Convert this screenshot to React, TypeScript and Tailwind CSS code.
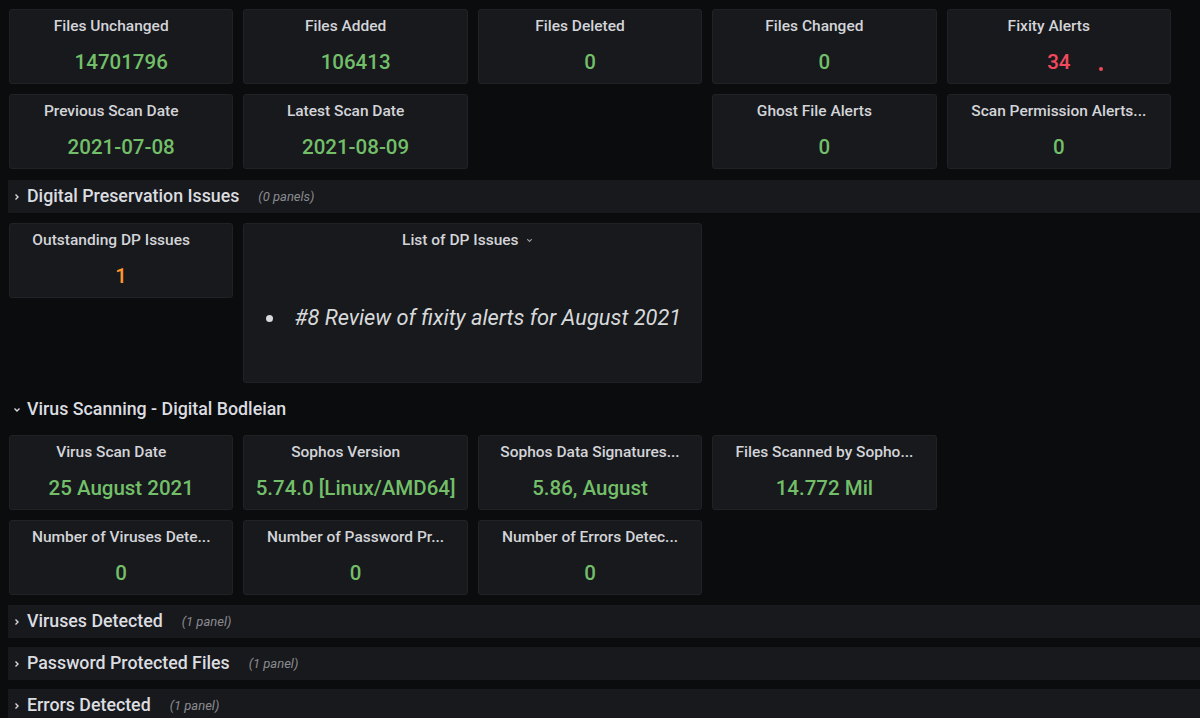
type Stat = {
  title: string;
  value?: string;
  color?: string;
  dot?: boolean;
  empty?: boolean;
};

const topStats: Stat[] = [
  { title: 'Files Unchanged', value: '14701796' },
  { title: 'Files Added', value: '106413' },
  { title: 'Files Deleted', value: '0' },
  { title: 'Files Changed', value: '0' },
  { title: 'Fixity Alerts', value: '34', color: 'text-[#f2495c]', dot: true },
  { title: 'Previous Scan Date', value: '2021-07-08' },
  { title: 'Latest Scan Date', value: '2021-08-09' },
  { title: '', empty: true },
  { title: 'Ghost File Alerts', value: '0' },
  { title: 'Scan Permission Alerts...', value: '0' },
];

const virusStats: Stat[] = [
  { title: 'Virus Scan Date', value: '25 August 2021' },
  { title: 'Sophos Version', value: '5.74.0 [Linux/AMD64]' },
  { title: 'Sophos Data Signatures...', value: '5.86, August' },
  { title: 'Files Scanned by Sopho...', value: '14.772 Mil' },
  { title: '', empty: true },
  { title: 'Number of Viruses Dete...', value: '0' },
  { title: 'Number of Password Pr...', value: '0' },
  { title: 'Number of Errors Detec...', value: '0' },
];

function StatPanel({ stat }: { stat: Stat }) {
  if (stat.empty) return <div className="h-[75px]" />;
  const truncated = stat.title.endsWith('...');
  return (
    <div className="relative h-[75px] rounded-[3px] border border-[#202226] bg-[#17191d] flex flex-col items-center">
      <div
        className={`mt-[6px] self-stretch text-center text-[15.5px] font-medium leading-[20px] text-[#d3d4d8] whitespace-nowrap ${
          truncated ? 'px-0' : 'pr-[20px]'
        }`}
      >
        {stat.title}
      </div>
      <div className={`mt-[14px] text-[20.5px] font-medium leading-[24px] ${stat.color ?? 'text-[#73bf69]'}`}>
        {stat.value}
      </div>
      {stat.dot && <span className="absolute left-[151px] top-[57px] h-[4px] w-[4px] rounded-full bg-[#f2495c]" />}
    </div>
  );
}

function Chevron({ open }: { open?: boolean }) {
  return (
    <svg width="10" height="10" viewBox="0 0 10 10" className="shrink-0">
      {open ? (
        <path d="M2.5 3.5 L5 6 L7.5 3.5" stroke="#d8d9da" strokeWidth="1.4" fill="none" />
      ) : (
        <path d="M3.5 2.5 L6 5 L3.5 7.5" stroke="#d8d9da" strokeWidth="1.4" fill="none" />
      )}
    </svg>
  );
}

function RowHeader({ title, count, open }: { title: string; count?: string; open?: boolean }) {
  return (
    <div
      className={`ml-[8px] flex h-[33px] items-center gap-[5px] pl-[4px] ${open ? '' : 'bg-[#18191d]'}`}
    >
      <Chevron open={open} />
      <span className="text-[17.8px] font-medium text-[#dcdde0]">{title}</span>
      {count && <span className="ml-[14px] text-[13px] italic text-[#8a8b8f]">{count}</span>}
    </div>
  );
}

export default function App() {
  return (
    <div
      className="min-h-[718px] w-[1200px] overflow-hidden bg-[#0b0c0e] pt-[9px]"
      style={{ fontFamily: 'Roboto, "Liberation Sans", sans-serif' }}
    >
      <div className="ml-[9px] grid w-[1162px] grid-cols-5 gap-[10px]">
        {topStats.map((s, i) => (
          <StatPanel key={i} stat={s} />
        ))}
      </div>

      <div className="mt-[11px]">
        <RowHeader title="Digital Preservation Issues" count="(0 panels)" />
      </div>

      <div className="ml-[9px] mt-[10px] grid w-[1162px] grid-cols-5 gap-[10px]">
        <StatPanel stat={{ title: 'Outstanding DP Issues', value: '1', color: 'text-[#ff9830]' }} />
        <div className="col-span-2 flex h-[160px] flex-col items-center rounded-[3px] border border-[#202226] bg-[#17191d]">
          <div className="mt-[6px] mr-[10px] flex items-center gap-[6px] text-[15.5px] font-medium leading-[20px] text-[#d3d4d8]">
            List of DP Issues
            <svg width="9" height="9" viewBox="0 0 10 10">
              <path d="M2.5 3.5 L5 6 L7.5 3.5" stroke="#9fa0a4" strokeWidth="1.2" fill="none" />
            </svg>
          </div>
          <ul className="mt-[52px] list-disc self-start pl-[42px] text-[21.8px] italic text-[#d8d9da] marker:text-[#d8d9da]">
            <li className="pl-[8px]">#8 Review of fixity alerts for August 2021</li>
          </ul>
        </div>
      </div>

      <div className="mt-[10px]">
        <RowHeader title="Virus Scanning - Digital Bodleian" open />
      </div>

      <div className="ml-[9px] mt-[9px] grid w-[1162px] grid-cols-5 gap-[10px]">
        {virusStats.map((s, i) => (
          <StatPanel key={i} stat={s} />
        ))}
      </div>

      <div className="mt-[10px] flex flex-col gap-[9px]">
        <RowHeader title="Viruses Detected" count="(1 panel)" />
        <RowHeader title="Password Protected Files" count="(1 panel)" />
        <RowHeader title="Errors Detected" count="(1 panel)" />
      </div>
    </div>
  );
}
